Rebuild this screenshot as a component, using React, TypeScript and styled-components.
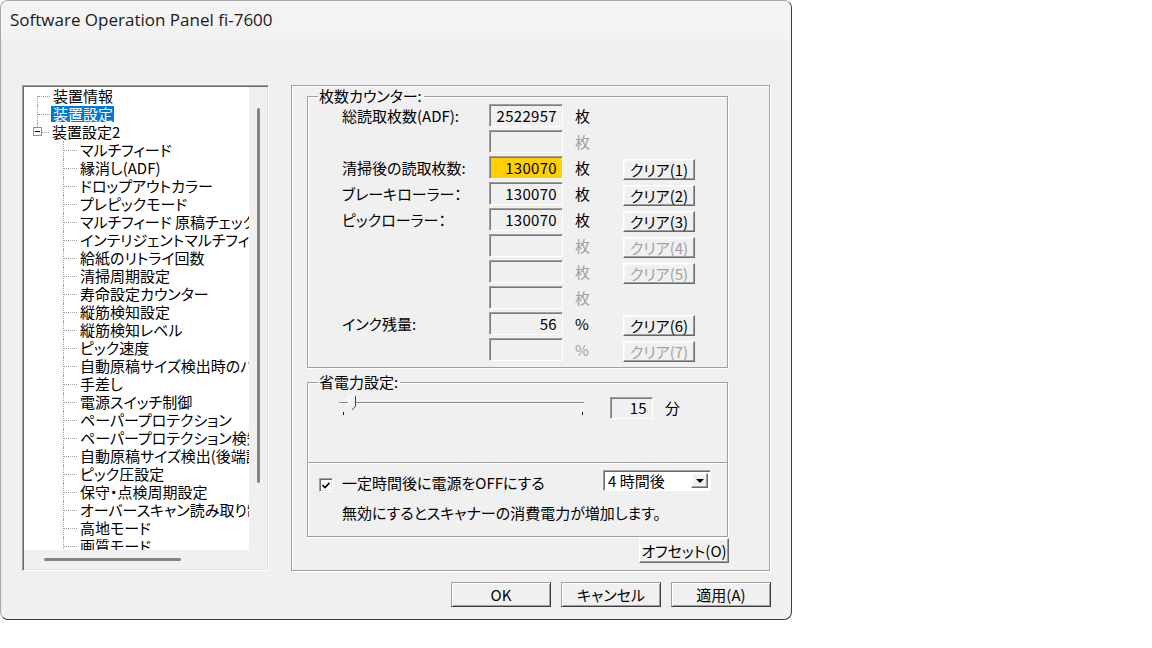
import React from "react";
import styled, { createGlobalStyle, css } from "styled-components";

const UI_FONT = `"Noto Sans CJK JP", "Noto Sans CJK SC", sans-serif`;

const Global = createGlobalStyle`
  html, body { margin: 0; padding: 0; background: #ffffff; }
  body { font-family: ${UI_FONT}; }
  * { box-sizing: border-box; }
`;

const Window = styled.div`
  width: 792px;
  height: 620px;
  background: #f0f0f0;
  border: 1px solid #a8a8a8;
  border-right-color: #3a3a3a;
  border-bottom-color: #3a3a3a;
  border-radius: 8px;
  display: flex;
  flex-direction: column;
  font-family: ${UI_FONT};
  font-size: 15px;
  line-height: 16px;
  color: #000;
  font-feature-settings: "palt";
  overflow: hidden;
`;

const TitleBar = styled.div`
  height: 38px;
  flex: none;
  display: flex;
  align-items: center;
  padding-left: 9px;
  font-family: "Open Sans", "Noto Sans", sans-serif;
  font-size: 17px;
  color: #1a1a1a;
  background: #f3f3f3;
`;

const Body = styled.div`
  flex: 1;
  display: flex;
  flex-direction: column;
  padding: 46px 21px 0 21px;
`;

const MainRow = styled.div`
  display: flex;
  gap: 22px;
  height: 486px;
`;

/* ---------- tree ---------- */

const TreeFrame = styled.div`
  width: 247px;
  flex: none;
  border: 1px solid;
  border-color: #a0a0a0 #ffffff #ffffff #a0a0a0;
  box-shadow: inset 1px 1px 0 #696969, inset -1px -1px 0 #e3e3e3;
  padding: 1px;
  display: grid;
  grid-template-columns: 1fr 18px;
  grid-template-rows: 1fr 19px;
`;

const TreeViewport = styled.div`
  background: #ffffff;
  overflow: hidden;
  display: flex;
  flex-direction: column;
`;

const VScroll = styled.div`
  background: #f0f0f0;
  display: flex;
  justify-content: center;
  padding-top: 21px;
`;

const VThumb = styled.div`
  width: 3px;
  height: 375px;
  border-radius: 2px;
  background: #858585;
`;

const HScroll = styled.div`
  background: #f0f0f0;
  display: flex;
  align-items: center;
  padding-left: 20px;
`;

const HThumb = styled.div`
  width: 137px;
  height: 3px;
  border-radius: 2px;
  background: #858585;
`;

const Corner = styled.div`
  background: #f0f0f0;
`;

const TreeRow = styled.div`
  display: flex;
  align-items: stretch;
  height: 18px;
  flex: none;
  white-space: nowrap;
`;

const Spacer = styled.span<{ $w: number }>`
  flex: none;
  width: ${(p) => p.$w}px;
`;

const VLine = styled.span<{ $part: "full" | "top" | "bottom" }>`
  flex: none;
  width: 0;
  border-left: 1px dotted #a0a0a0;
  ${(p) =>
    p.$part === "full"
      ? css`align-self: stretch;`
      : p.$part === "top"
      ? css`align-self: flex-start; height: 9px;`
      : css`align-self: flex-end; height: 9px;`}
`;

const HLine = styled.span<{ $w: number }>`
  flex: none;
  width: ${(p) => p.$w}px;
  height: 0;
  align-self: center;
  border-top: 1px dotted #a0a0a0;
`;

const BoxCell = styled.span`
  flex: none;
  width: 9px;
  display: flex;
  flex-direction: column;
  align-items: center;
`;

const BoxStem = styled.span`
  width: 0;
  height: 4px;
  border-left: 1px dotted #a0a0a0;
`;

const ExpandBox = styled.span`
  width: 9px;
  height: 9px;
  border: 1px solid #919191;
  background: #fff;
  display: flex;
  align-items: center;
  justify-content: center;
  &::before {
    content: "";
    width: 5px;
    height: 1px;
    background: #000;
  }
`;

const NodeLabel = styled.span<{ $selected?: boolean }>`
  align-self: center;
  height: 16px;
  line-height: 16px;
  padding: 0 1px 0 2px;
  margin-left: 1px;
  background: ${(p) => (p.$selected ? "#0078d7" : "transparent")};
  color: ${(p) => (p.$selected ? "#ffffff" : "#000000")};
`;

const childItems = [
  "マルチフィード",
  "縁消し(ADF)",
  "ドロップアウトカラー",
  "プレピックモード",
  "マルチフィード 原稿チェック領域指定",
  "インテリジェントマルチフィード機能",
  "給紙のリトライ回数",
  "清掃周期設定",
  "寿命設定カウンター",
  "縦筋検知設定",
  "縦筋検知レベル",
  "ピック速度",
  "自動原稿サイズ検出時のバック",
  "手差し",
  "電源スイッチ制御",
  "ペーパープロテクション",
  "ペーパープロテクション検知範囲",
  "自動原稿サイズ検出(後端設定)",
  "ピック圧設定",
  "保守・点検周期設定",
  "オーバースキャン読み取り制御",
  "高地モード",
  "画質モード",
];

function Tree() {
  return (
    <TreeFrame>
      <TreeViewport>
        <TreeRow>
          <Spacer $w={13} />
          <VLine $part="bottom" />
          <HLine $w={12} />
          <NodeLabel>装置情報</NodeLabel>
        </TreeRow>
        <TreeRow>
          <Spacer $w={13} />
          <VLine $part="full" />
          <HLine $w={12} />
          <NodeLabel $selected>装置設定</NodeLabel>
        </TreeRow>
        <TreeRow>
          <Spacer $w={9} />
          <BoxCell>
            <BoxStem />
            <ExpandBox />
          </BoxCell>
          <HLine $w={7} />
          <NodeLabel>装置設定2</NodeLabel>
        </TreeRow>
        {childItems.map((t) => (
          <TreeRow key={t}>
            <Spacer $w={39} />
            <VLine $part="full" />
            <HLine $w={13} />
            <NodeLabel>{t}</NodeLabel>
          </TreeRow>
        ))}
      </TreeViewport>
      <VScroll>
        <VThumb />
      </VScroll>
      <HScroll>
        <HThumb />
      </HScroll>
      <Corner />
    </TreeFrame>
  );
}

/* ---------- right panel ---------- */

const Panel = styled.div`
  width: 479px;
  flex: none;
  border: 1px solid #a0a0a0;
  box-shadow: inset 1px 1px 0 #ffffff, 1px 1px 0 #ffffff;
  padding: 2px 41px 0 15px;
  display: flex;
  flex-direction: column;
`;

const Group = styled.fieldset<{ $gapTop?: number }>`
  margin: ${(p) => p.$gapTop ?? 0}px 0 0 0;
  padding: 0;
  min-width: 0;
  border: 1px solid #a0a0a0;
  box-shadow: inset 1px 1px 0 #ffffff, 1px 1px 0 #ffffff;
`;

const Legend = styled.legend`
  margin-left: 10px;
  padding: 0 2px 0 1px;
  line-height: 16px;
  height: 16px;
  font-size: 15px;
`;

const CounterGrid = styled.div`
  display: grid;
  grid-template-columns: 147px 74px 60px 72px;
  grid-auto-rows: 23px;
  row-gap: 3px;
  padding: 0 0 6px 34px;
`;

const FieldLabel = styled.span`
  align-self: center;
  white-space: nowrap;
`;

const ReadBox = styled.div<{ $bg?: string; $w?: number }>`
  width: ${(p) => p.$w ?? 74}px;
  height: 23px;
  flex: none;
  border: 1px solid;
  border-color: #a0a0a0 #ffffff #ffffff #a0a0a0;
  box-shadow: inset 1px 1px 0 #7a7a7a;
  background: ${(p) => p.$bg ?? "#f0f0f0"};
  display: flex;
  align-items: center;
  justify-content: flex-end;
  padding-right: 5px;
  font-size: 15px;
  letter-spacing: 0.3px;
`;

const Unit = styled.span<{ $disabled?: boolean }>`
  align-self: center;
  padding-left: 12px;
  color: ${(p) => (p.$disabled ? "#a0a0a0" : "#000")};
`;

const bevel = css`
  border: 1px solid;
  border-color: #ffffff #696969 #696969 #ffffff;
  box-shadow: inset -1px -1px 0 #a0a0a0, inset 1px 1px 0 #f8f8f8;
  background: #f0f0f0;
  font-family: ${UI_FONT};
  font-feature-settings: "palt";
  font-size: 15px;
  line-height: 16px;
  padding: 0;
  display: flex;
  align-items: center;
  justify-content: center;
`;

const ClearButton = styled.button<{ $disabled?: boolean }>`
  ${bevel};
  width: 72px;
  height: 21px;
  align-self: end;
  margin-bottom: -1px;
  color: ${(p) => (p.$disabled ? "#a0a0a0" : "#000")};
`;

type CounterRow = {
  label: string;
  value: string;
  unit: string;
  disabled?: boolean;
  highlight?: boolean;
  btn?: string;
  btnDisabled?: boolean;
};

const counterRows: CounterRow[] = [
  { label: "総読取枚数(ADF):", value: "2522957", unit: "枚" },
  { label: "", value: "", unit: "枚", disabled: true },
  { label: "清掃後の読取枚数:", value: "130070", unit: "枚", highlight: true, btn: "クリア(1)" },
  { label: "ブレーキローラー：", value: "130070", unit: "枚", btn: "クリア(2)" },
  { label: "ピックローラー：", value: "130070", unit: "枚", btn: "クリア(3)" },
  { label: "", value: "", unit: "枚", disabled: true, btn: "クリア(4)", btnDisabled: true },
  { label: "", value: "", unit: "枚", disabled: true, btn: "クリア(5)", btnDisabled: true },
  { label: "", value: "", unit: "枚", disabled: true },
  { label: "インク残量:", value: "56", unit: "%", btn: "クリア(6)" },
  { label: "", value: "", unit: "%", disabled: true, btn: "クリア(7)", btnDisabled: true },
];

const PowerTop = styled.div`
  height: 72px;
  display: flex;
  align-items: flex-start;
  padding: 7px 0 0 31px;
`;

const SliderCol = styled.div`
  width: 245px;
  display: flex;
  flex-direction: column;
  padding-top: 5px;
`;

const TrackWrap = styled.div`
  position: relative;
  height: 2px;
  border-top: 1px solid #8a8a8a;
  border-bottom: 1px solid #ffffff;
`;

const Thumb = styled.svg`
  position: absolute;
  left: 9px;
  top: -7px;
`;

const Ticks = styled.div`
  display: flex;
  justify-content: space-between;
  padding: 8px 1px 0 4px;
`;

const Tick = styled.span`
  width: 1px;
  height: 3px;
  background: #000;
`;

const MinutesBox = styled.div`
  display: flex;
  align-items: center;
  margin-left: 26px;
`;

const Divider = styled.div`
  height: 2px;
  border-top: 1px solid #a0a0a0;
  border-bottom: 1px solid #ffffff;
`;

const PowerBottom = styled.div`
  height: 72px;
  display: flex;
  flex-direction: column;
  padding: 6px 0 0 11px;
  gap: 14px;
`;

const CheckRow = styled.div`
  display: flex;
  align-items: flex-end;
`;

const CheckBox = styled.span`
  width: 14px;
  height: 14px;
  flex: none;
  border: 1px solid;
  border-color: #a0a0a0 #ffffff #ffffff #a0a0a0;
  box-shadow: inset 1px 1px 0 #696969, inset -1px -1px 0 #e3e3e3;
  background: #fff;
  display: flex;
  align-items: center;
  justify-content: center;
  margin-bottom: -1px;
`;

const CheckText = styled.span`
  margin-left: 9px;
  width: 261px;
  white-space: nowrap;
`;

const Select = styled.div`
  width: 108px;
  height: 21px;
  border: 1px solid;
  border-color: #a0a0a0 #ffffff #ffffff #a0a0a0;
  box-shadow: inset 1px 1px 0 #696969;
  background: #ffffff;
  display: flex;
  align-items: stretch;
  padding: 2px 2px 2px 2px;
`;

const SelectText = styled.span`
  flex: 1;
  display: flex;
  align-items: center;
  padding-left: 2px;
  white-space: nowrap;
`;

const SelectArrow = styled.span`
  ${bevel};
  width: 17px;
`;

const Note = styled.div`
  padding-left: 23px;
  white-space: nowrap;
`;

const OffsetButton = styled.button`
  ${bevel};
  width: 90px;
  height: 25px;
  align-self: flex-end;
  margin: 1px -1px 0 0;
`;

const Footer = styled.div`
  display: flex;
  justify-content: flex-end;
  gap: 10px;
  padding: 11px 0 0 0;
  margin-right: -1px;
`;

const FooterButton = styled.button`
  ${bevel};
  width: 100px;
  height: 25px;
  border-color: #a0a0a0 #3c3c3c #3c3c3c #a0a0a0;
  box-shadow: inset 1px 1px 0 #ffffff, inset -1px -1px 0 #a0a0a0;
`;

function RightPanel() {
  return (
    <Panel>
      <Group>
        <Legend>枚数カウンター:</Legend>
        <CounterGrid>
          {counterRows.map((r, i) => (
            <React.Fragment key={i}>
              <FieldLabel>{r.label}</FieldLabel>
              <ReadBox $bg={r.highlight ? "#ffcf00" : undefined}>{r.value}</ReadBox>
              <Unit $disabled={r.disabled}>{r.unit}</Unit>
              {r.btn ? (
                <ClearButton $disabled={r.btnDisabled}>{r.btn}</ClearButton>
              ) : (
                <span />
              )}
            </React.Fragment>
          ))}
        </CounterGrid>
      </Group>
      <Group $gapTop={6}>
        <Legend>省電力設定:</Legend>
        <PowerTop>
          <SliderCol>
            <TrackWrap>
              <Thumb width="9" height="15" viewBox="0 0 9 15">
                <path d="M0.5 0.5 H7.5 V10 L4 13.5 L0.5 10 Z" fill="#f0f0f0" />
                <path d="M0.5 10 V0.5 H7" stroke="#ffffff" fill="none" />
                <path d="M7.5 0 V10.2 L4 14" stroke="#404040" fill="none" />
              </Thumb>
            </TrackWrap>
            <Ticks>
              <Tick />
              <Tick />
            </Ticks>
          </SliderCol>
          <MinutesBox>
            <ReadBox $w={43} style={{ height: 22 }}>15</ReadBox>
            <Unit>分</Unit>
          </MinutesBox>
        </PowerTop>
        <Divider />
        <PowerBottom>
          <CheckRow>
            <CheckBox>
              <svg width="8" height="7" viewBox="0 0 8 7">
                <path d="M0.5 3 L3 5.5 L7.5 0.8" stroke="#000" strokeWidth="1.6" fill="none" />
              </svg>
            </CheckBox>
            <CheckText>一定時間後に電源をOFFにする</CheckText>
            <Select>
              <SelectText>4 時間後</SelectText>
              <SelectArrow>
                <svg width="8" height="4" viewBox="0 0 8 4">
                  <path d="M0 0 H8 L4 4 Z" fill="#000" />
                </svg>
              </SelectArrow>
            </Select>
          </CheckRow>
          <Note>無効にするとスキャナーの消費電力が増加します。</Note>
        </PowerBottom>
      </Group>
      <OffsetButton>オフセット(O)</OffsetButton>
    </Panel>
  );
}

export default function App() {
  return (
    <>
      <Global />
      <Window>
        <TitleBar>Software Operation Panel fi-7600</TitleBar>
        <Body>
          <MainRow>
            <Tree />
            <RightPanel />
          </MainRow>
          <Footer>
            <FooterButton>OK</FooterButton>
            <FooterButton>キャンセル</FooterButton>
            <FooterButton>適用(A)</FooterButton>
          </Footer>
        </Body>
      </Window>
    </>
  );
}
